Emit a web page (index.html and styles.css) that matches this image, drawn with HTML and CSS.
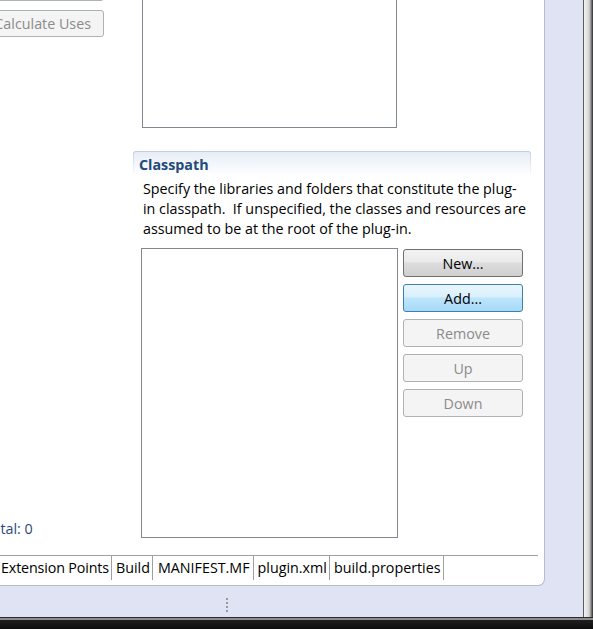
FILE: index.html
```html
<!DOCTYPE html>
<html>
<head>
<meta charset="utf-8">
<link rel="stylesheet" href="styles.css">
</head>
<body>
<div class="window">
  <div class="upper">
    <div class="workspace">
      <div class="editor">
        <div class="content">
          <div class="left">
            <div class="btn disabled prev-btn"></div>
            <div class="btn disabled calc-btn">Calculate Uses</div>
            <div class="total">Total: 0</div>
          </div>
          <div class="right">
            <div class="listbox top-list"></div>
            <div class="section">
              <div class="section-head">Classpath</div>
              <div class="desc">Specify the libraries and folders that constitute the plug-<br>in classpath.&nbsp; If unspecified, the classes and resources are<br>assumed to be at the root of the plug-in.</div>
              <div class="cp-body">
                <div class="listbox cp-list"></div>
                <div class="buttons">
                  <div class="btn normal">New...</div>
                  <div class="btn hot">Add...</div>
                  <div class="btn disabled">Remove</div>
                  <div class="btn disabled">Up</div>
                  <div class="btn disabled">Down</div>
                </div>
              </div>
            </div>
          </div>
        </div>
        <div class="tabs">
          <div class="tab first">Extension Points</div>
          <div class="tab">Build</div>
          <div class="tab wide">MANIFEST.MF</div>
          <div class="tab">plugin.xml</div>
          <div class="tab">build.properties</div>
        </div>
      </div>
      <div class="grip">
        <span class="dot"></span><span class="dot"></span><span class="dot"></span><span class="dot"></span>
      </div>
    </div>
    <div class="frame-right"></div>
  </div>
  <div class="frame-bottom"></div>
</div>
</body>
</html>
```
FILE: styles.css
```css
* { box-sizing: border-box; }
html, body { margin: 0; padding: 0; }
body {
  width: 593px;
  height: 629px;
  overflow: hidden;
  background: #dfe3f3;
  font-family: "Open Sans", "Noto Sans", sans-serif;
  font-size: 14.3px;
  color: #000;
}
.window { display: flex; flex-direction: column; height: 629px; }
.upper { display: flex; height: 617px; }
.workspace { flex: 1; display: flex; flex-direction: column; }
.editor {
  width: 545px;
  height: 586px;
  background: #fff;
  border-right: 1px solid #b7bccb;
  border-bottom: 1px solid #b7bccb;
  border-bottom-right-radius: 7px;
  display: flex;
  flex-direction: column;
  overflow: hidden;
}
.content { height: 555px; display: flex; }
.left {
  width: 133px;
  display: flex;
  flex-direction: column;
  align-items: flex-start;
}
.btn {
  height: 28px;
  line-height: 27px;
  border: 1px solid #707070;
  border-radius: 3px;
  text-align: center;
  white-space: nowrap;
}
.btn.disabled {
  background: #f4f4f4;
  border-color: #adb2b5;
  color: #8b8b8b;
}
.btn.normal {
  background: linear-gradient(#f2f2f2 0%, #ebebeb 45%, #dddddd 50%, #cfcfcf 100%);
  border-color: #707070;
}
.btn.hot {
  background: linear-gradient(#eaf6fd 0%, #d9f0fc 45%, #bee6fd 50%, #a7d9f5 100%);
  border-color: #3c7fb1;
}
.prev-btn {
  width: 130px;
  margin-left: -26px;
  margin-top: -27px;
  height: 28px;
}
.calc-btn {
  width: 130px;
  margin-left: -26px;
  margin-top: 9px;
  height: 27px;
  text-align: right;
  padding-right: 12px;
  line-height: 26px;
}
.total {
  margin-top: auto;
  margin-bottom: 16px;
  margin-left: -16px;
  color: #2b4a78;
  line-height: 20px;
}
.right { width: 398px; }
.listbox {
  background: #fff;
  border: 1px solid #828790;
}
.top-list {
  margin-left: 9px;
  width: 255px;
  height: 138px;
  margin-top: -10px;
}
.section { margin-top: 23px; }
.section-head {
  height: 25px;
  border: 1px solid transparent;
  border-bottom: 0;
  border-radius: 3px 3px 0 0;
  background:
    linear-gradient(#e7edf6, #ffffff) padding-box,
    linear-gradient(#c3cee1, rgba(255,255,255,0)) border-box;
  color: #1f4a7a;
  font-weight: bold;
  padding-left: 5px;
  line-height: 26px;
}
.desc {
  padding-left: 10px;
  margin-top: 3px;
  line-height: 20px;
  white-space: nowrap;
}
.cp-body {
  display: flex;
  margin-top: 9px;
  align-items: flex-start;
}
.cp-list {
  margin-left: 8px;
  width: 257px;
  height: 290px;
}
.buttons {
  margin-left: 5px;
  margin-top: 1px;
  display: flex;
  flex-direction: column;
  gap: 7px;
}
.buttons .btn { width: 120px; }
.tabs {
  width: 538px;
  border-top: 1px solid #a0a0a0;
  display: flex;
  height: 25px;
}
.tab {
  height: 24px;
  line-height: 24px;
  padding: 0 2px 0 4px;
  border-right: 1px solid #a0a0a0;
  white-space: nowrap;
}
.tab.first { padding: 0 2px 0 1px; letter-spacing: -0.15px; }
.tab.wide { padding: 0 3px 0 5px; }
.grip {
  height: 31px;
  padding-left: 226px;
  padding-top: 12px;
  display: flex;
  flex-direction: column;
  gap: 2px;
}
.dot {
  display: block;
  width: 2px;
  height: 2px;
  background: #9a9a9a;
}
.frame-right {
  width: 10px;
  background: linear-gradient(to right, #5c5c5c 0 1px, #f2f2f2 1px, #d6d6d6 6px, #8a8a8a 8px, #2a2a2a 10px);
}
.frame-bottom {
  height: 12px;
  background: linear-gradient(#2a2a2a 0 1px, #8e8e8e 1px 3px, #1e1e1e 3px, #0d0d0d 100%);
}
```
